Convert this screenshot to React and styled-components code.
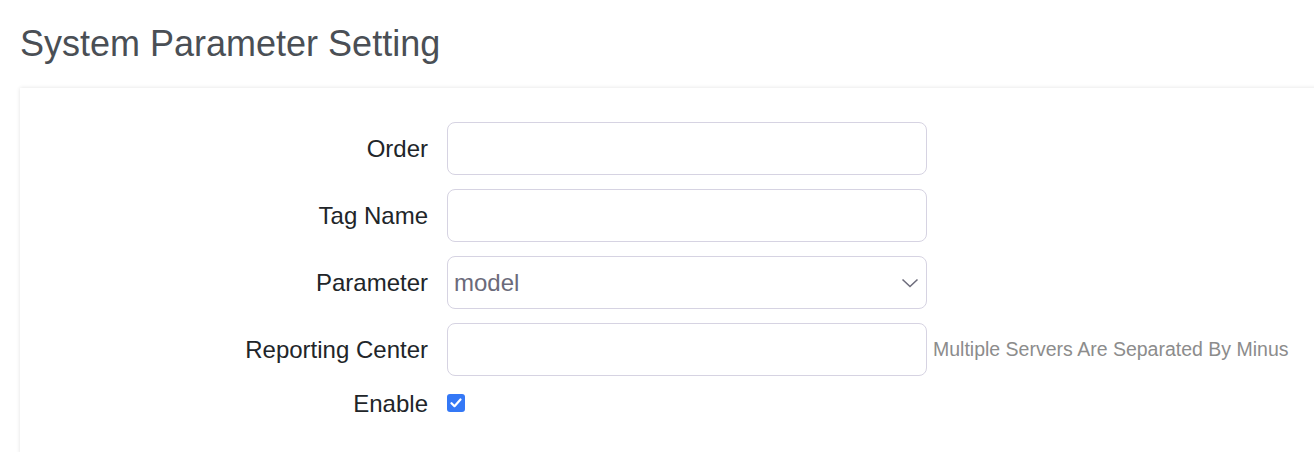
import React from 'react';
import styled, { createGlobalStyle } from 'styled-components';

const GlobalStyle = createGlobalStyle`
  body {
    margin: 0;
    background: #fff;
    font-family: "Liberation Sans", Arial, sans-serif;
    overflow: hidden;
  }
`;

const Page = styled.div`
  padding: 0 0 0 20px;
`;

const Title = styled.h3`
  margin: 0;
  padding-top: 22px;
  height: 88px;
  box-sizing: border-box;
  font-size: 36px;
  font-weight: 400;
  line-height: 43px;
  color: #4a4f55;
`;

const Card = styled.div`
  background: #fff;
  box-shadow: 0 0 4px rgba(0, 0, 0, 0.12);
  margin-right: -20px;
  padding: 34px 0 36px;
`;

const Form = styled.div`
  display: grid;
  grid-template-columns: 427px 480px auto;
  row-gap: 14px;
  align-items: center;
`;

const Label = styled.label`
  text-align: right;
  padding-right: 19px;
  font-size: 24px;
  line-height: 28px;
  color: #212529;
`;

const TextInput = styled.input`
  box-sizing: border-box;
  width: 480px;
  height: 53px;
  border: 1px solid #d6d3e2;
  border-radius: 8px;
  padding: 0 6px;
  font-family: inherit;
  font-size: 24px;
  color: #212529;
  background: #fff;
  outline: none;
`;

const SelectWrap = styled.div`
  position: relative;
  width: 480px;
  height: 53px;
`;

const Select = styled.select`
  appearance: none;
  box-sizing: border-box;
  width: 100%;
  height: 100%;
  border: 1px solid #d6d3e2;
  border-radius: 8px;
  padding: 0 40px 0 6px;
  font-family: inherit;
  font-size: 24px;
  color: #6b6a7a;
  background: #fff;
  outline: none;
`;

const Chevron = styled.svg`
  position: absolute;
  right: 8px;
  top: 22px;
  pointer-events: none;
`;

const Help = styled.span`
  padding-left: 6px;
  font-size: 19.5px;
  color: #8c8c8c;
  white-space: nowrap;
`;

const CheckBox = styled.span`
  display: inline-flex;
  align-items: center;
  justify-content: center;
  width: 18px;
  height: 18px;
  border-radius: 3px;
  background: ${({ checked }) => (checked ? '#3478f6' : '#fff')};
  margin-top: -3px;
`;

const Cell = styled.div`
  display: flex;
  align-items: center;
  height: 28px;
`;

const fields = [
  { label: 'Order', type: 'text' },
  { label: 'Tag Name', type: 'text' },
  { label: 'Parameter', type: 'select', options: ['model'] },
  { label: 'Reporting Center', type: 'text', help: 'Multiple Servers Are Separated By Minus' },
];

export default function App() {
  return (
    <>
      <GlobalStyle />
      <Page>
        <Title>System Parameter Setting</Title>
        <Card>
          <Form>
            {fields.map((f) => (
              <React.Fragment key={f.label}>
                <Label>{f.label}</Label>
                {f.type === 'select' ? (
                  <SelectWrap>
                    <Select defaultValue={f.options[0]}>
                      {f.options.map((o) => (
                        <option key={o}>{o}</option>
                      ))}
                    </Select>
                    <Chevron width="18" height="10" viewBox="0 0 18 10" fill="none">
                      <path d="M1.5 1.5 L9 8.5 L16.5 1.5" stroke="#6e6d7c" strokeWidth="1.6" />
                    </Chevron>
                  </SelectWrap>
                ) : (
                  <TextInput type="text" />
                )}
                {f.help ? <Help>{f.help}</Help> : <span />}
              </React.Fragment>
            ))}
            <Label>Enable</Label>
            <Cell>
              <CheckBox checked>
                <svg width="12" height="10" viewBox="0 0 12 10" fill="none">
                  <path d="M1.5 5.2 L4.5 8.2 L10.5 1.5" stroke="#fff" strokeWidth="2.2" strokeLinecap="round" strokeLinejoin="round" />
                </svg>
              </CheckBox>
            </Cell>
            <span />
          </Form>
        </Card>
      </Page>
    </>
  );
}
